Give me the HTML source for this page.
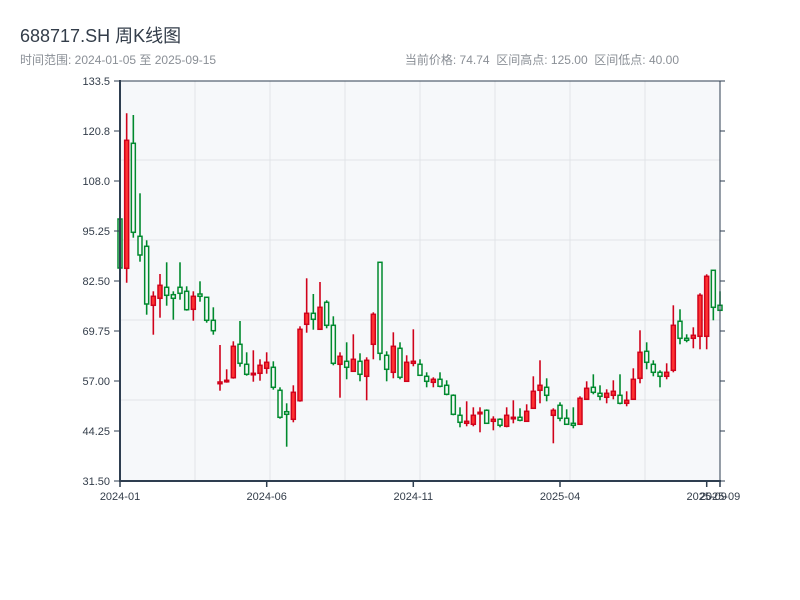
<!DOCTYPE html>
<html><head><meta charset="utf-8"><style>
body{margin:0;background:#fff;width:800px;height:600px;overflow:hidden;font-family:"Liberation Sans","Noto Sans CJK SC",sans-serif}
.t{position:absolute;left:20px;top:22px;font-size:18px;color:#333d4a}
.s{position:absolute;left:20px;top:51px;font-size:12px;color:#8a8f96}
.r{position:absolute;right:121px;top:51px;font-size:12px;color:#8a8f96;word-spacing:0px}
svg{position:absolute;left:0;top:0}
</style></head><body>
<div class="t">688717.SH 周K线图</div>
<div class="s">时间范围: 2024-01-05 至 2025-09-15</div>
<div class="r">当前价格: 74.74 &nbsp;区间高点: 125.00 &nbsp;区间低点: 40.00</div>
<svg id="c" width="800" height="600" xmlns="http://www.w3.org/2000/svg" font-family="Liberation Sans, sans-serif" font-size="11" fill="#333d4a"></svg>
<script>
var D=[
['g',219,268,219,268],['r',140.3,268.3,113.3,282.7],['g',143.3,232.3,115,237.7],['g',236.3,255,193.3,261.7],['g',246.3,304,240.3,314.7],
['r',296.3,305.3,291.3,334.7],['r',285.3,298.3,274,317.7],['g',287.3,295.3,262.3,305.7],['g',294.7,298.3,291.3,319.7],['g',287.3,293.3,262.3,299.7],
['g',291.3,309.7,286.3,310.7],['r',296.3,309.3,291.3,320.7],['g',294,296.3,281.3,301.7],['g',297.3,320.3,297.3,322.7],['g',320.3,330.7,307.3,334.7],
['r',382,383.7,345,390.7],['r',380.3,381.7,369.3,382.7],['r',346.3,377.7,341.3,378.7],['g',344.3,363.3,321,366.7],['g',364.3,374.3,352.3,375.7],
['r',373.3,374.7,350.3,381.7],['r',365.3,373.3,359.3,380.7],['r',362.3,368.3,352.3,373.7],['g',367.3,387.3,361.3,389.7],['g',390.3,417.3,387.3,418.7],
['g',411.7,414.3,403.3,446.7],['r',392.3,419.3,385.3,422.3],['r',329.3,400.7,326.3,401.7],['r',313.3,324.3,278.3,332.7],['g',313.3,319.3,294,329.7],
['r',307.3,329.3,282,329.3],['g',302.3,325.3,300.3,328.3],['g',325.3,363.3,316.3,365.3],['r',356.3,364.3,352.3,397.7],['g',361.3,367.3,342.3,379.3],
['r',359.3,371.3,334.3,371.3],['g',361.3,374.3,353.3,381.3],['r',360.3,376.3,357.3,400.3],['r',314.3,344.3,312.3,359.3],['g',262.3,353.3,262.3,360.3],
['g',355.3,369.3,351.3,381.3],['r',346.3,372.3,332.3,378.3],['g',348.3,377.3,342.3,379.3],['r',362.3,381.3,355.3,381.3],['r',361.3,363.3,329.3,366.3],
['g',364.3,375.3,359.3,375.3],['g',376.3,381.3,372.3,387.3],['r',379.3,382.3,377.3,387.3],['g',379.3,386.3,372.3,387.3],['g',385.3,394.3,380.3,395.3],
['g',395.3,414.3,394.3,415.3],['g',415.3,422.3,407.3,427.3],['r',421.3,423.3,401.3,426.3],['r',415.3,424.3,407.3,426.3],['r',412.3,413.3,407.3,432.3],
['g',410.3,423.3,409.3,423.3],['r',419.3,421.3,416.3,430.3],['g',419.3,425.3,418.3,427.3],['r',415.3,426.3,407.3,427.3],['r',417.3,418.3,400.3,423.3],
['g',417.3,420.3,408.3,421.3],['r',411.3,421.3,404.3,421.3],['r',391.3,408.3,376.3,408.3],['r',385.3,390.3,360.3,403.3],['g',387.3,395.3,378.3,401.3],
['r',410.3,415.3,408.3,443.3],['g',405.3,418.3,402.3,421.3],['g',418.3,424.3,409.3,424.3],['g',423.3,425.3,407.3,428.3],['r',398.3,424.3,396.3,424.3],
['r',388.3,399.3,381.3,399.3],['g',387.3,392.3,374.3,394.3],['g',393.3,396.3,385.3,400.3],['r',393.3,397.3,389.3,403.3],['r',391.3,395.3,380.3,399.3],
['g',395.3,403.3,374.3,404.3],['r',400.3,403.3,391.3,406.3],['r',379.3,399.3,368.3,399.3],['r',352.3,378.3,330.3,383.3],['g',351.3,362.3,342.3,369.3],
['g',364.3,372.3,360.3,376.3],['g',372.3,376.3,370.3,387.3],['r',372.3,376.3,363.3,379.3],['r',325.3,370.3,305.3,372.3],['g',321.3,338.3,309.3,344.3],
['g',338.3,340.3,334.3,342.3],['r',335.3,338.3,327.3,348.3],['r',295.3,336.3,293.3,349.3],['r',276.3,336.3,274.3,349.3],['g',270.3,307.3,270.3,320.3],
['g',305.3,310.3,291.3,310.3]];
var s='<rect x="120" y="81" width="600" height="400" fill="#f6f8fa"/>';
[195,270,345,420,495,570,645].forEach(function(x){s+='<line x1="'+x+'" y1="81" x2="'+x+'" y2="481" stroke="#e1e4e8"/>';});
[160,240,320,400].forEach(function(y){s+='<line x1="120" y1="'+y+'" x2="720" y2="'+y+'" stroke="#e1e4e8"/>';});
D.forEach(function(c,i){var x=120+i*600/90,g=c[0]=='g',col=g?'#008a2e':'#d0021b';
s+='<line x1="'+x+'" y1="'+c[3]+'" x2="'+x+'" y2="'+c[4]+'" stroke="'+col+'" stroke-width="1.6"/>';
var h=Math.max(c[2]-c[1],1.5);
s+='<rect x="'+(x-2)+'" y="'+c[1]+'" width="4" height="'+h+'" fill="'+(g?'#f6f8fa':'#ff3333')+'" stroke="'+col+'" stroke-width="1.5"/>';});
s+='<rect x="120" y="81" width="600" height="400" fill="none" stroke="#2e3e50" stroke-width="1"/>';
s+='<line x1="120" y1="80" x2="120" y2="482" stroke="#2e3e50" stroke-width="2"/><line x1="119" y1="481" x2="721" y2="481" stroke="#2e3e50" stroke-width="2"/>';
var L=['133.5','120.8','108.0','95.25','82.50','69.75','57.00','44.25','31.50'];
L.forEach(function(t,i){var y=81+i*50;s+='<line x1="114" y1="'+y+'" x2="120" y2="'+y+'" stroke="#2e3e50"/><line x1="720" y1="'+y+'" x2="725" y2="'+y+'" stroke="#2e3e50"/><text x="110" y="'+(y+4)+'" text-anchor="end">'+t+'</text>';});
[[120,'2024-01'],[266.7,'2024-06'],[413.3,'2024-11'],[560,'2025-04'],[706.7,'2025-09'],[720,'2025-09']].forEach(function(a){s+='<line x1="'+a[0]+'" y1="481" x2="'+a[0]+'" y2="487" stroke="#2e3e50" stroke-width="1.5"/><text x="'+a[0]+'" y="500" text-anchor="middle">'+a[1]+'</text>';});
document.getElementById('c').innerHTML=s;
</script>
</body></html>
